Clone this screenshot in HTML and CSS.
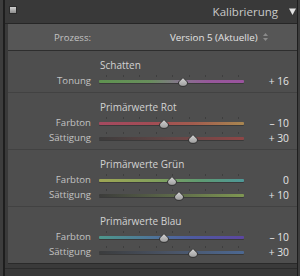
FILE: index.html
```html
<!DOCTYPE html>
<html lang="de">
<head>
<meta charset="utf-8">
<title>Kalibrierung</title>
<link rel="stylesheet" href="styles.css">
</head>
<body>
<div class="app">
  <div class="rail"></div>
  <div class="panel">
    <div class="header">
      <span class="toggle"></span>
      <span class="title">Kalibrierung</span>
      <svg class="tri" viewBox="0 0 7 7" width="7" height="7"><polygon points="0,0.5 7,0.5 3.5,7" fill="#e2e2e2"/></svg>
    </div>
    <div class="body">
      <div class="prozess">
        <span class="label">Prozess:</span>
        <span class="popup">Version 5 (Aktuelle)<svg class="updown" viewBox="0 0 5 8" width="5" height="8"><polygon points="2.5,0 5,3 0,3" fill="#8a8a8a"/><polygon points="0,5 5,5 2.5,8" fill="#8a8a8a"/></svg></span>
      </div>

      <div class="section">
        <div class="sec-title">Schatten</div>
        <div class="row">
          <span class="label">Tonung</span>
          <div class="slider tonung"><span class="ticks"><i></i><i></i><i></i><i></i><i></i><i></i><i></i><i></i><i></i></span><span class="thumb" style="left:58%"><svg viewBox="0 0 11 10" width="11" height="10"><defs><linearGradient id="g1" x1="0" y1="0" x2="0" y2="1"><stop offset="0" stop-color="#d4d4d4"/><stop offset="1" stop-color="#9c9c9c"/></linearGradient></defs><path d="M5.5 0.6 L9.9 5 C10.4 8 8.6 9.4 5.5 9.4 C2.4 9.4 0.6 8 1.1 5 Z" fill="url(#g1)" stroke="#262626" stroke-width="0.9"/></svg></span></div>
          <span class="value">+ 16</span>
        </div>
      </div>

      <div class="section">
        <div class="sec-title">Primärwerte Rot</div>
        <div class="row">
          <span class="label">Farbton</span>
          <div class="slider rot-ton"><span class="ticks"><i></i><i></i><i></i><i></i><i></i><i></i><i></i><i></i><i></i></span><span class="thumb" style="left:45%"><svg viewBox="0 0 11 10" width="11" height="10"><path d="M5.5 0.6 L9.9 5 C10.4 8 8.6 9.4 5.5 9.4 C2.4 9.4 0.6 8 1.1 5 Z" fill="url(#g1)" stroke="#262626" stroke-width="0.9"/></svg></span></div>
          <span class="value">– 10</span>
        </div>
        <div class="row">
          <span class="label">Sättigung</span>
          <div class="slider rot-sat"><span class="ticks"><i></i><i></i><i></i><i></i><i></i><i></i><i></i><i></i><i></i></span><span class="thumb" style="left:65%"><svg viewBox="0 0 11 10" width="11" height="10"><path d="M5.5 0.6 L9.9 5 C10.4 8 8.6 9.4 5.5 9.4 C2.4 9.4 0.6 8 1.1 5 Z" fill="url(#g1)" stroke="#262626" stroke-width="0.9"/></svg></span></div>
          <span class="value">+ 30</span>
        </div>
      </div>

      <div class="section">
        <div class="sec-title">Primärwerte Grün</div>
        <div class="row">
          <span class="label">Farbton</span>
          <div class="slider gruen-ton"><span class="ticks"><i></i><i></i><i></i><i></i><i></i><i></i><i></i><i></i><i></i></span><span class="thumb" style="left:50%"><svg viewBox="0 0 11 10" width="11" height="10"><path d="M5.5 0.6 L9.9 5 C10.4 8 8.6 9.4 5.5 9.4 C2.4 9.4 0.6 8 1.1 5 Z" fill="url(#g1)" stroke="#262626" stroke-width="0.9"/></svg></span></div>
          <span class="value">0</span>
        </div>
        <div class="row">
          <span class="label">Sättigung</span>
          <div class="slider gruen-sat"><span class="ticks"><i></i><i></i><i></i><i></i><i></i><i></i><i></i><i></i><i></i></span><span class="thumb" style="left:55%"><svg viewBox="0 0 11 10" width="11" height="10"><path d="M5.5 0.6 L9.9 5 C10.4 8 8.6 9.4 5.5 9.4 C2.4 9.4 0.6 8 1.1 5 Z" fill="url(#g1)" stroke="#262626" stroke-width="0.9"/></svg></span></div>
          <span class="value">+ 10</span>
        </div>
      </div>

      <div class="section last">
        <div class="sec-title">Primärwerte Blau</div>
        <div class="row">
          <span class="label">Farbton</span>
          <div class="slider blau-ton"><span class="ticks"><i></i><i></i><i></i><i></i><i></i><i></i><i></i><i></i><i></i></span><span class="thumb" style="left:45%"><svg viewBox="0 0 11 10" width="11" height="10"><path d="M5.5 0.6 L9.9 5 C10.4 8 8.6 9.4 5.5 9.4 C2.4 9.4 0.6 8 1.1 5 Z" fill="url(#g1)" stroke="#262626" stroke-width="0.9"/></svg></span></div>
          <span class="value">– 10</span>
        </div>
        <div class="row">
          <span class="label">Sättigung</span>
          <div class="slider blau-sat"><span class="ticks"><i></i><i></i><i></i><i></i><i></i><i></i><i></i><i></i><i></i></span><span class="thumb" style="left:65%"><svg viewBox="0 0 11 10" width="11" height="10"><path d="M5.5 0.6 L9.9 5 C10.4 8 8.6 9.4 5.5 9.4 C2.4 9.4 0.6 8 1.1 5 Z" fill="url(#g1)" stroke="#262626" stroke-width="0.9"/></svg></span></div>
          <span class="value">+ 30</span>
        </div>
      </div>
    </div>
    <div class="foot"></div>
  </div>
  <div class="rail-r"></div>
</div>
</body>
</html>
```

FILE: styles.css
```css
html, body {
  margin: 0;
  padding: 0;
  background: #3b3b3b;
}
body {
  width: 300px;
  height: 276px;
  overflow: hidden;
  font-family: "Open Sans", "DejaVu Sans", sans-serif;
}
.app {
  display: flex;
  height: 276px;
}
.rail {
  width: 3px;
  background: #3d3d3d;
  border-right: 2px solid #1e1e1e;
}
.rail-r {
  width: 2px;
  background: #3d3d3d;
  border-left: 1px solid #1e1e1e;
}
.panel {
  width: 292px;
  display: flex;
  flex-direction: column;
  background: #3a3a3a;
}
.header {
  height: 23px;
  border-bottom: 1px solid #262626;
  display: flex;
  align-items: center;
  padding: 0 1px 0 4px;
  background: #393939;
}
.toggle {
  align-self: flex-start;
  margin-top: 6px;
  width: 6px;
  height: 6px;
  border: 1px solid #2a2a2a;
  background: linear-gradient(#d0d0d0, #8c8c8c);
}
.title {
  margin-left: auto;
  font-size: 11.5px;
  color: #c9c9c9;
  line-height: 14px;
  margin-top: 1px;
}
.tri {
  margin-left: 11px;
  display: block;
}
.body {
  margin-left: 3px;
  background: #4e4e4e;
  display: flex;
  flex-direction: column;
}
.prozess {
  height: 26px;
  background: #565656;
  border-bottom: 1px solid #2e2e2e;
  display: grid;
  grid-template-columns: 83px auto;
  column-gap: 79px;
  align-items: center;
  justify-content: start;
}
.popup {
  font-size: 9.8px;
  color: #e2e2e2;
  display: flex;
  align-items: center;
}
.updown {
  margin-left: 5px;
  display: block;
}
.label {
  text-align: right;
  font-size: 9.6px;
  color: #c3c3c3;
}
.section {
  padding: 6px 0 4px;
  border-bottom: 1px solid #424242;
}
.section.last {
  border-bottom-color: #2a2a2a;
}
.sec-title {
  padding-left: 92px;
  height: 16px;
  line-height: 16px;
  font-size: 10px;
  color: #d2d2d2;
}
.row {
  display: grid;
  grid-template-columns: 83px 145px 37px;
  column-gap: 8px;
  height: 15px;
  align-items: center;
}
.value {
  text-align: right;
  font-size: 10.3px;
  color: #e4e4e4;
}
.slider {
  position: relative;
  height: 3px;
  margin-top: 2px;
  border-radius: 1px;
  box-shadow: 0 1px 0 rgba(0,0,0,0.25);
}
.ticks {
  position: absolute;
  left: 7px;
  width: 133px;
  top: -5px;
  height: 2px;
  display: flex;
  justify-content: space-between;
}
.ticks i {
  width: 1px;
  height: 2px;
  background: #3e3e3e;
}
.thumb {
  position: absolute;
  top: -3px;
  width: 11px;
  height: 10px;
  transform: translateX(-50%);
}
.thumb svg {
  display: block;
}
.tonung {
  background: linear-gradient(to right, #5f9350 0%, #688e5c 35%, #83768a 55%, #96589a 75%, #9a539e 100%);
}
.rot-ton {
  background: linear-gradient(to right, #a44a60 0%, #a24c55 35%, #a25c4e 65%, #a88650 100%);
}
.rot-sat {
  background: linear-gradient(to right, #3d3c3c 0%, #654646 50%, #8e4646 100%);
}
.gruen-ton {
  background: linear-gradient(to right, #9ea654 0%, #82a05c 40%, #5e9a72 70%, #4e9898 100%);
}
.gruen-sat {
  background: linear-gradient(to right, #3c3c3b 0%, #5c6849 50%, #7f9752 100%);
}
.blau-ton {
  background: linear-gradient(to right, #4e988c 0%, #4e7698 35%, #4e5aa0 65%, #5c46a0 100%);
}
.blau-sat {
  background: linear-gradient(to right, #3b3c3d 0%, #4a5466 50%, #4c6892 100%);
}
.foot {
  margin-top: 4px;
  flex: 1;
  border-top: 1px solid #2c2c2c;
  background: #393939;
}
```
